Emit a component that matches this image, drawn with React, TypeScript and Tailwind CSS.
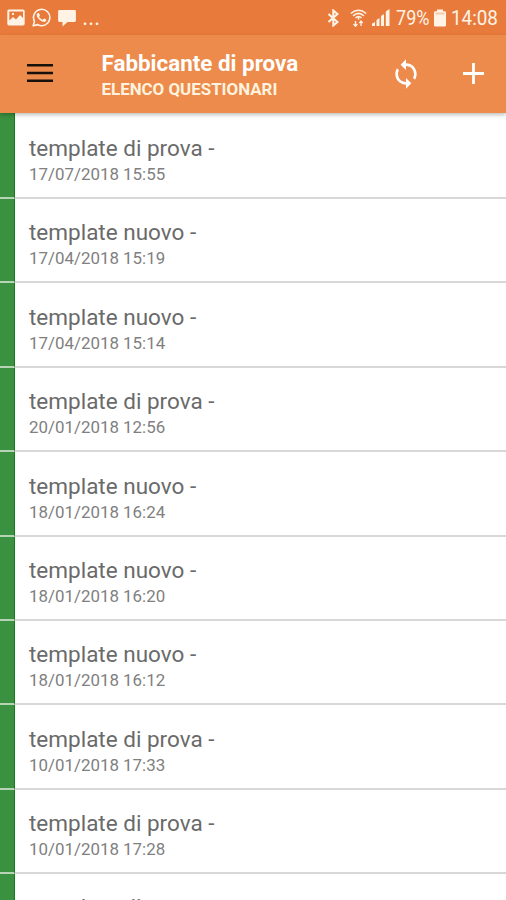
const rows = [
  { title: "template di prova -", date: "17/07/2018 15:55" },
  { title: "template nuovo -", date: "17/04/2018 15:19" },
  { title: "template nuovo -", date: "17/04/2018 15:14" },
  { title: "template di prova -", date: "20/01/2018 12:56" },
  { title: "template nuovo -", date: "18/01/2018 16:24" },
  { title: "template nuovo -", date: "18/01/2018 16:20" },
  { title: "template nuovo -", date: "18/01/2018 16:12" },
  { title: "template di prova -", date: "10/01/2018 17:33" },
  { title: "template di prova -", date: "10/01/2018 17:28" },
  { title: "template di prova -", date: "" },
];

function StatusBar() {
  return (
    <div className="flex h-[35px] shrink-0 items-center justify-between bg-[#e87b3c] pr-[8px] pl-[7px] text-[#fff3e6]">
      <div className="flex items-center">
        <svg className="h-[17px] w-[18px]" viewBox="0 0 18 17" fill="currentColor">
          <path fillRule="evenodd" d="M2 0.5h14a1.7 1.7 0 0 1 1.7 1.7v12.6a1.7 1.7 0 0 1-1.7 1.7H2A1.7 1.7 0 0 1 .3 14.8V2.2A1.7 1.7 0 0 1 2 .5zM2.3 2.5v9l3.700-3.500 3 2.500 4-4.500 3 3V2.500zM5 4h2v2H5z" />
        </svg>
        <svg className="ml-[7px] h-[19px] w-[19px]" viewBox="0 0 24 24" fill="currentColor">
          <path d="M17.472 14.382c-.297-.149-1.758-.867-2.030-.967-.273-.099-.471-.148-.670.150-.197.297-.767.966-.940 1.164-.173.199-.347.223-.644.075-.297-.150-1.255-.463-2.390-1.475-.883-.788-1.480-1.761-1.653-2.059-.173-.297-.018-.458.130-.606.134-.133.298-.347.446-.520.149-.174.198-.298.298-.497.099-.198.050-.371-.025-.520-.075-.149-.669-1.612-.916-2.207-.242-.579-.487-.500-.669-.510-.173-.008-.371-.010-.570-.010-.198 0-.520.074-.792.372-.272.297-1.040 1.016-1.040 2.479 0 1.462 1.065 2.875 1.213 3.074.149.198 2.096 3.200 5.077 4.487.709.306 1.262.489 1.694.625.712.227 1.360.195 1.871.118.571-.085 1.758-.719 2.006-1.413.248-.694.248-1.289.173-1.413-.074-.124-.272-.198-.570-.347z" />
          <path d="M1.500 22.500l1.600-5.700A10.300 10.300 0 1 1 7.200 21z" fill="none" stroke="currentColor" strokeWidth="2" strokeLinejoin="round" />
        </svg>
        <svg className="ml-[7px] h-[18px] w-[18px]" viewBox="0 0 18 18" fill="currentColor">
          <path d="M1.500 1h15a1.400 1.400 0 0 1 1.400 1.400v9.200a1.400 1.400 0 0 1-1.400 1.400H9.500L4.500 17.500V13h-3A1.400 1.400 0 0 1 .1 11.600V2.400A1.400 1.400 0 0 1 1.500 1z" />
        </svg>
        <svg className="ml-[7px] h-[18px] w-[16px]" viewBox="0 0 16 18" fill="currentColor">
          <circle cx="2" cy="14.800" r="1.400" />
          <circle cx="8" cy="14.800" r="1.400" />
          <circle cx="14" cy="14.800" r="1.400" />
        </svg>
      </div>
      <div className="flex items-center">
        <svg className="h-[18px] w-[13px]" viewBox="0 0 13 18" fill="none" stroke="currentColor" strokeWidth="2.100">
          <path d="M2.500 5l9 8-4.200 3.500v-15L11.500 5l-9 8" />
        </svg>
        <svg className="ml-[11px] h-[18px] w-[17px]" viewBox="0 0 17 18" fill="none" stroke="currentColor" strokeWidth="1.600">
          <path d="M.8 4.500Q8.500-2 16.200 4.500M3.100 6.800Q8.500 2 13.900 6.800M5.500 9Q8.500 6 11.500 9" />
          <path d="M8.500 7.500v3" />
          <path d="M5.500 12v5M3.600 15l1.900 2.300L7.400 15M11 17v-5M9.300 14l1.700-2 1.700 2" strokeWidth="1.300" />
        </svg>
        <svg className="ml-[5px] h-[18px] w-[18px]" viewBox="0 0 18 18" fill="currentColor">
          <path d="M0 17v-2.500l3-1.500v4zM4.500 17v-6l3-2v8zM9 17V7l3-2v12zM13.800 17V2.500L17.500 0v17z" />
        </svg>
        <span className="mt-[2px] ml-[6px] w-[34px] origin-left scale-x-[.88] text-[20.500px] leading-none whitespace-nowrap">79%</span>
        <svg className="ml-[4px] h-[18px] w-[12px]" viewBox="0 0 12 18" fill="currentColor">
          <path d="M3 .5h6v1.700H3zM1.400 2.200h9.200A1.400 1.400 0 0 1 12 3.600v12.600a1.400 1.400 0 0 1-1.400 1.400H1.400A1.400 1.400 0 0 1 0 16.200V3.600A1.400 1.400 0 0 1 1.400 2.200z" />
          <path d="M1.500 3.500h9v2h-9z" opacity=".35" fill="#e87b3c" />
        </svg>
        <span className="mt-[2px] ml-[5px] w-[47px] origin-left scale-x-[.92] text-[20.500px] leading-none whitespace-nowrap">14:08</span>
      </div>
    </div>
  );
}

function Toolbar() {
  return (
    <header className="z-10 flex h-[78px] shrink-0 items-center bg-[#ec8b4b] pl-[27px] text-white shadow-[0_2px_4px_rgba(0,0,0,0.25)]">
      <svg className="mt-[-2px] h-[18px] w-[26px] shrink-0" viewBox="0 0 26 18" fill="#17100b">
        <path d="M0 0h26v2.600H0zM0 7.700h26v2.600H0zM0 15.400h26V18H0z" />
      </svg>
      <div className="ml-[48.500px] flex-1 pt-[2px] font-bold whitespace-nowrap">
        <h1 className="text-[22.400px] leading-[28px]">Fabbicante di prova</h1>
        <p className="text-[16.900px] leading-[24px] text-[#fff3df]">ELENCO QUESTIONARI</p>
      </div>
      <svg className="mt-[-1px] h-[32px] w-[32px] shrink-0" viewBox="0 0 24 24" fill="currentColor">
        <path d="M12 4V1L8 5l4 4V6c3.310 0 6 2.690 6 6 0 1.010-.250 1.970-.700 2.800l1.460 1.460C19.540 15.030 20 13.570 20 12c0-4.420-3.580-8-8-8zm0 14c-3.310 0-6-2.690-6-6 0-1.010.250-1.970.700-2.800L5.240 7.740C4.460 8.970 4 10.430 4 12c0 4.420 3.580 8 8 8v3l4-4-4-4v3z" />
      </svg>
      <svg className="mt-[-1px] mr-[22.500px] ml-[41px] h-[21px] w-[21px] shrink-0" viewBox="0 0 21 21" fill="currentColor">
        <path d="M9.100 0h2.800v9.100H21v2.800h-9.100V21H9.100v-9.100H0V9.100h9.100z" />
      </svg>
    </header>
  );
}

export default function App() {
  return (
    <div className="flex h-[900px] w-[506px] flex-col overflow-hidden bg-white font-['Roboto',sans-serif]">
      <StatusBar />
      <Toolbar />
      <ul className="min-h-0 flex-1 overflow-hidden">
        {rows.map((row, i) => (
          <li key={i} className="flex h-[84.380px] first:h-[86px]">
            <div className="w-[15px] shrink-0 border-r border-b-2 border-r-[#157b1b] border-b-[#b6d3b6] bg-[#3a913f]" />
            <div className="flex flex-1 flex-col justify-end border-b-2 border-[#d8d8d8] pb-[11px] pl-[14px] whitespace-nowrap">
              <p className="text-[22.500px] leading-[28px] text-[#6a6a6a]">{row.title}</p>
              <p className="h-[24px] text-[16.900px] leading-[24px] text-[#808080]">{row.date}</p>
            </div>
          </li>
        ))}
      </ul>
    </div>
  );
}
